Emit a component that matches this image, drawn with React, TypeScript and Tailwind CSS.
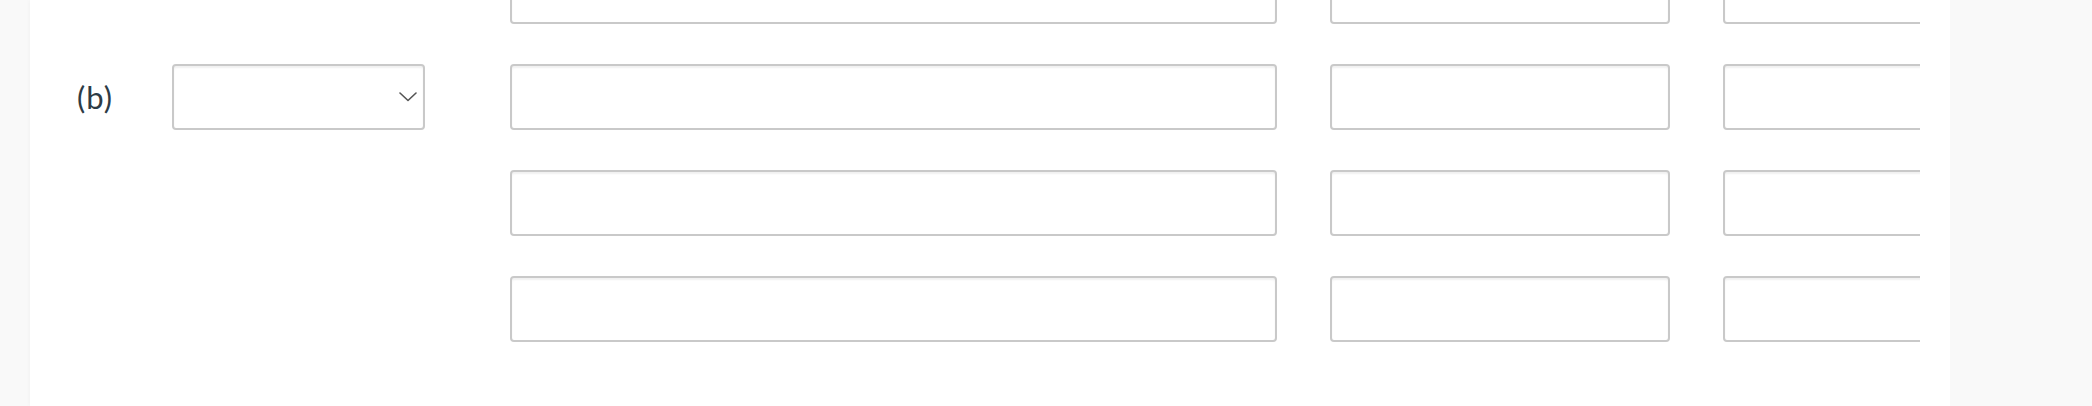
import React from 'react';

const rows = [0, 1, 2, 3];

const inputBox =
  'h-[66px] shrink-0 rounded-[4px] border-2 border-[#c9c9c9] bg-white shadow-[inset_0_2px_2px_rgba(0,0,0,0.06)]';

export default function App() {
  return (
    <div className="flex h-[406px] w-[2092px] overflow-hidden bg-[#f9f9f9] font-['Lato',sans-serif] text-[#2d3b45]">
      {/* main white panel */}
      <div className="ml-[30px] flex w-[1920px] shrink-0 bg-white pl-[43px] pr-[30px] shadow-[-2px_0_3px_rgba(0,0,0,0.02)]">
        <div className="-mt-[42px] flex min-w-0 flex-1 items-start">
          {/* label column */}
          <div className="mt-[106px] flex h-[66px] w-[99px] shrink-0 items-center pl-[4px] text-[31px] leading-none tracking-[1px]">
            (b)
          </div>

          {/* select */}
          <div className="mt-[106px] flex h-[66px] w-[253px] shrink-0 items-center justify-end rounded-[4px] border-2 border-[#c9c9c9] bg-white pr-[6px] shadow-[inset_0_2px_2px_rgba(0,0,0,0.06)]">
            <svg width="18" height="10" viewBox="0 0 18 10" fill="none">
              <polyline
                points="1,1 9,8.5 17,1"
                stroke="#555"
                strokeWidth="1.6"
                strokeLinejoin="round"
                strokeLinecap="round"
              />
            </svg>
          </div>

          {/* answer inputs */}
          <div className="ml-[85px] flex min-w-0 flex-1 flex-col gap-[40px] overflow-hidden">
            {rows.map((r) => (
              <div key={r} className="flex gap-[53px]">
                <div className={`${inputBox} w-[767px]`} />
                <div className={`${inputBox} w-[340px]`} />
                <div className={`${inputBox} w-[340px]`} />
              </div>
            ))}
          </div>
        </div>
      </div>
    </div>
  );
}
